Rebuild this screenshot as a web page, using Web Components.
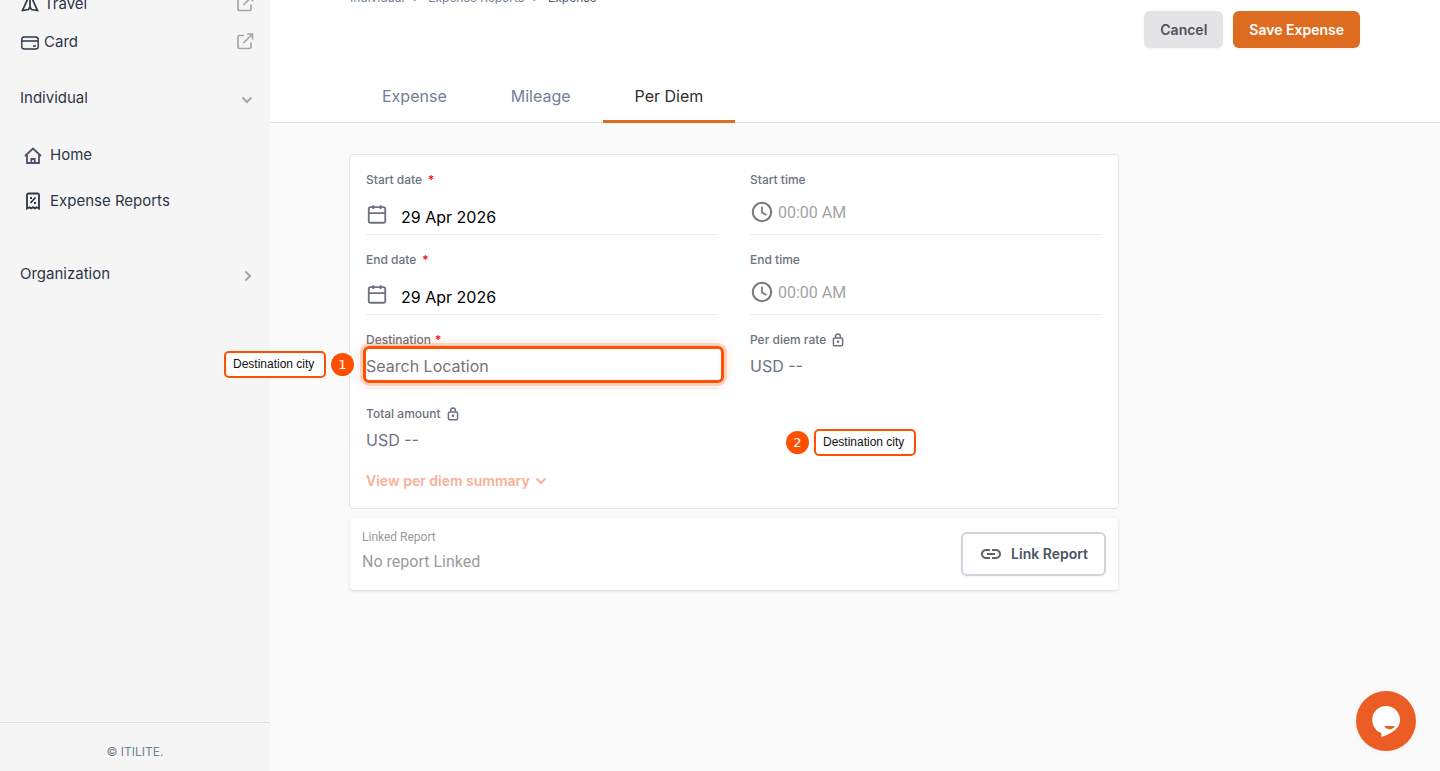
<!DOCTYPE html>
<html lang="en">
<head>
<meta charset="utf-8">
<title>Per Diem Expense</title>
<style>
html, body { margin: 0; height: 100%; }
body { font-family: Inter, "Liberation Sans", sans-serif; font-size: 16px; line-height: 24px; color: #2d3748; overflow: hidden; }
</style>
</head>
<body>
<expense-app></expense-app>
<script>
const icons = {
  travel: ['0 0 20 20', '<path d="M10 0 2.500 16.500 8.500 15.500 10 13l1.500 2.500 6 1zM10 5.500V14" stroke-width="1.7"/>'],
  card: ['0 0 20 20', '<rect x="1.800" y="5" width="16.400" height="12" rx="2.600" stroke-width="1.4"/><path d="M2 9h16M13 14h3" stroke-width="1.4"/>'],
  external: ['0 0 20 20', '<path d="M9 3.500H4.500Q3 3.500 3 5v10Q3 16.500 4.500 16.500h10q1.500 0 1.500-1.500v-4.500M8.500 11 17 2.500M12 2h5.500v5.500" stroke-width="1.7"/>'],
  down: ['0 0 16 16', '<path d="m3.500 5.500 4.500 4.500 4.500-4.500" stroke-width="2"/>'],
  right: ['0 0 16 16', '<path d="m6.500 3.500 4.500 4.500-4.500 4.500" stroke-width="2"/>'],
  home: ['0 0 20 20', '<path d="M2 11 10 3.500l8 7.500M4 10v8h12v-8M8.300 18v-4h3.400v4" stroke="#4a5568" stroke-width="1.8"/>'],
  receipt: ['0 0 20 20', '<path d="M4 17.500V4Q4 2.500 5.500 2.500h9Q16 2.500 16 4v13.500L13.500 16.200 11.800 17.500 10 16.200 8.200 17.500 6.500 16.200zM7.500 12l5-5.500" stroke-width="1.8"/><path d="M7 6h2v2H7zM11 11h2v2h-2z" fill="currentColor" stroke="none"/>'],
  calendar: ['0 0 24 24', '<rect x="3" y="4.500" width="18" height="17" rx="2"/><path d="M8 2.500v4M16 2.500v4M3 11h18" />'],
  clock: ['0 0 24 24', '<circle cx="12" cy="12" r="9.200"/><path d="M12 6.500v6l4.500 2.600" stroke-width="1.700"/>'],
  lock: ['0 0 14 14', '<rect x="2.400" y="5" width="9.200" height="7.800" rx="1.200" stroke-width="1.500"/><path d="M4.700 5V3.300a2.300 2.300 0 0 1 4.600 0V5" stroke-width="1.500"/><circle cx="7" cy="8.800" r="1.300" fill="currentColor" stroke="none"/>'],
  link: ['0 0 24 24', '<path d="M3.900 12c0-1.710 1.390-3.100 3.100-3.100h4V7H7c-2.760 0-5 2.240-5 5s2.240 5 5 5h4v-1.900H7c-1.710 0-3.100-1.390-3.100-3.100zM8 13h8v-2H8v2zm9-6h-4v1.900h4c1.710 0 3.100 1.390 3.100 3.100s-1.390 3.100-3.100 3.100h-4V17h4c2.760 0 5-2.240 5-5s-2.240-5-5-5z" fill="#636369" stroke="none"/>'],
  chat: ['0 0 60 60', '<path d="M30 15a14 14 0 0 1 14 14c0 8-7 13-18.500 17l-.3-3.900A14 14 0 0 1 30 15z" fill="#fff" stroke="none"/><path d="M28.500 35h10.300c-1 4.200-9.300 4.200-10.300 0z" fill="#eb5d25" stroke="none"/>']
};

function define(name, css, html) {
  customElements.define(name, class extends HTMLElement {
    constructor() {
      super();
      const a = key => this.getAttribute(key) || '';
      this.attachShadow({ mode: 'open' }).innerHTML =
        `<style>*{box-sizing:border-box}${css}</style>` + (typeof html === 'function' ? html(a) : html);
    }
  });
}

define('ui-icon',
  `:host{display:inline-flex;flex:none;width:20px;height:20px}
   svg{width:100%;height:100%;fill:none;stroke:currentColor;stroke-width:2}`,
  a => { const [box, body] = icons[a('name')]; return `<svg viewBox="${box}" aria-hidden="true">${body}</svg>`; });

define('nav-link',
  `:host{display:block;font-size:15px}
   a{display:flex;align-items:center;height:38px;gap:4px;color:inherit;text-decoration:none}
   :host([nested]) a{height:46px;gap:7px;padding-left:3px}
   span{flex:1}
   .out{color:#a6a6a6}`,
  a => `<a href="#"><ui-icon name="${a('icon')}"></ui-icon><span><slot></slot></span>${a('out') ? '<ui-icon class="out" name="external"></ui-icon>' : ''}</a>`);

define('nav-group',
  `:host{display:block;font-size:15px}
   button{display:flex;justify-content:space-between;align-items:center;width:100%;height:24px;padding:0;border:0;background:none;font:inherit;color:inherit;text-align:left}
   ui-icon{color:#a6a6a6;width:16px;height:16px;margin-top:4px}`,
  a => `<button><slot></slot><ui-icon name="${a('icon')}"></ui-icon></button>`);

define('side-bar',
  `:host{display:flex;flex-direction:column;flex:none;width:270px;height:100vh;background:#f5f5f5;overflow:hidden}
   nav{flex:1;display:flex;flex-direction:column;padding:0 15px 0 20px;margin-top:-15px}
   .apps{margin-bottom:25px}
   .pages{margin:22px 0 38px}
   footer{height:49px;border-top:1px solid #dcdcdc;text-align:center;font-size:12px;line-height:58px;color:#718096}`,
  `<nav>
    <div class="apps"><nav-link icon="travel" out="1">Travel</nav-link><nav-link icon="card" out="1">Card</nav-link></div>
    <nav-group icon="down">Individual</nav-group>
    <div class="pages"><nav-link nested icon="home">Home</nav-link><nav-link nested icon="receipt">Expense Reports</nav-link></div>
    <nav-group icon="right">Organization</nav-group>
   </nav>
   <footer>© ITILITE.</footer>`);

define('app-button',
  `button{font:600 14px/20px Inter,"Liberation Sans",sans-serif;display:flex;align-items:center;gap:8px;height:37px;padding:0 16px;border:0;border-radius:6px;background:#e4e4e7;color:#52525b;box-shadow:0 1px 2px #0000000d;white-space:nowrap}
   :host{display:block}
   :host([primary]) button{background:#dd6b20;color:#fff}
   :host([outline]) button{height:44px;background:#fff;border:2px solid #d1d5db;color:#4b5563}`,
  `<button><slot></slot></button>`);

define('page-header',
  `:host{display:flex;flex-direction:column;height:123px;padding:0 80px;background:#fff;border-bottom:1px solid #e0e0e0;box-sizing:border-box}
   .top{display:flex;justify-content:space-between;flex:1}
   ol{display:flex;gap:8px;margin:-10px 0 0;padding:0;list-style:none;font-size:12px;line-height:16px;color:#718096}
   a{color:inherit;text-decoration:none}
   li:last-child{color:#4a5568}
   .actions{display:flex;gap:10px;margin-top:11px}
   nav{display:flex;margin-bottom:-1px}
   nav a{padding:12px 32px;border-bottom:3px solid transparent;color:#718096}
   nav a[aria-current]{border-color:#dd6b20;color:#2d2d2d}`,
  `<div class="top"><ol><li><a href="#">Individual</a></li><li>&gt;</li><li><a href="#">Expense Reports</a></li><li>&gt;</li><li>Expense</li></ol>
    <div class="actions"><app-button>Cancel</app-button><app-button primary>Save Expense</app-button></div></div>
   <nav><a href="#">Expense</a><a href="#">Mileage</a><a href="#" aria-current="page">Per Diem</a></nav>`);

define('form-field',
  `:host{display:block;min-width:0;padding-top:16px;height:80px;box-sizing:border-box}
   label{display:flex;align-items:center;gap:6px;font-size:12px;font-weight:500;line-height:18px;color:#6b7280}
   b{color:#f00;font-weight:500}
   .row{display:flex;align-items:center;height:46px;border-bottom:1px solid #e8eff4}
   input{flex:1;min-width:0;width:100%;height:24px;padding:0;border:0;outline:0;background:none;font:inherit;color:#000}
   input::placeholder{color:#757575;opacity:1}
   ui-icon{width:24px;height:24px;color:#6b7280}
   label ui-icon{width:14px;height:14px}
   :host([kind=date]) .row{padding-top:5px;gap:13px}
   :host([kind=date]) .row ui-icon{width:22px;height:22px}
   :host([kind=date]) input{height:30px;padding-top:6px}
   :host([kind=time]) .row{gap:4px;font-family:Roboto,sans-serif}
   :host([kind=time]) .row ui-icon{color:#757575}
   :host([kind=time]) input{height:26px;padding-top:2px}
   :host([kind=time]) input::placeholder{color:#a3a3a3}
   :host([kind=search]),:host([kind=value]){height:74px}
   :host([kind=search]) .row{position:relative;height:40px;padding-bottom:5px}
   :host([kind=search]) label{gap:4px}
   :host([kind=value]) label{gap:5px}
   :host([kind=value]) .row{height:34px;border:0;color:#6b7280}
   .focus{position:absolute;inset:-3px -6px 5px -3px;border:3px solid #ff4f00;border-radius:6px;box-shadow:0 0 0 3px #ff4f0033,0 0 14px #ff4f0033;pointer-events:none}`,
  a => {
    const kind = a('kind'), icon = { date: 'calendar', time: 'clock' }[kind];
    const body = kind === 'value' ? `<output id="f">${a('value')}</output>`
      : `<input id="f" type="text" value="${a('value')}" placeholder="${a('placeholder')}">`;
    return `<label for="f">${a('label')}${a('required') ? '<b>*</b>' : ''}${kind === 'value' ? '<ui-icon name="lock"></ui-icon>' : ''}</label>
      <div class="row">${icon ? `<ui-icon name="${icon}"></ui-icon>` : ''}${body}${kind === 'search' ? '<div class="focus"></div>' : ''}</div>`;
  });

define('call-out',
  `:host{position:absolute;display:flex;align-items:center;gap:5px;color:#111;font:12px/23px "Liberation Sans",sans-serif;white-space:nowrap}
   :host([reverse]){flex-direction:row-reverse}
   .text{min-width:102px;height:27px;padding:0 7px;border:2px solid #ff4f00;border-radius:5px;background:#fff}
   .num{width:23px;height:23px;border-radius:50%;background:#ff4f00;color:#fff;text-align:center;font:13px/24px "DejaVu Sans",sans-serif;box-shadow:0 0 0 2px #fff}`,
  a => `<span class="text"><slot></slot></span><span class="num">${a('number')}</span>`);

define('per-diem-form',
  `:host{display:block;position:relative;background:#fff;border-radius:4px;box-shadow:0 0 0 1px #e5e5e5;padding:0 16px 9px}
   .grid{display:grid;grid-template-columns:1fr 1fr;column-gap:32px}
   button{display:flex;align-items:center;gap:3px;height:36px;padding:0;border:0;background:none;font:600 14px/20px Inter,"Liberation Sans",sans-serif;color:#f8b195}
   button ui-icon{width:16px;height:16px}
   .one{right:764px;top:196px}
   .two{left:436px;top:274px}`,
  `<div class="grid">
    <form-field kind="date" label="Start date" required="1" value="29 Apr 2026"></form-field>
    <form-field kind="time" label="Start time" placeholder="00:00 AM"></form-field>
    <form-field kind="date" label="End date" required="1" value="29 Apr 2026"></form-field>
    <form-field kind="time" label="End time" placeholder="00:00 AM"></form-field>
    <form-field kind="search" label="Destination" required="1" placeholder="Search Location"></form-field>
    <form-field kind="value" label="Per diem rate" value="USD --"></form-field>
    <form-field kind="value" label="Total amount" value="USD --"></form-field>
   </div>
   <button>View per diem summary <ui-icon name="down"></ui-icon></button>
   <call-out class="one" number="1">Destination city</call-out>
   <call-out class="two" number="2" reverse>Destination city</call-out>`);

define('linked-report',
  `:host{display:flex;justify-content:space-between;align-items:center;height:72px;padding:0 12px;background:#fff;border-radius:4px;box-shadow:0 1px 3px #00000026;font-family:Roboto,sans-serif;color:#9b9b9b}
   small{display:block;font-size:12px;line-height:20px}
   p{margin:3px 0 7px}
   ui-icon{width:24px;height:24px}`,
  `<div><small>Linked Report</small><p>No report Linked</p></div>
   <app-button outline><ui-icon name="link"></ui-icon>Link Report</app-button>`);

define('chat-button',
  `:host{position:fixed;right:24px;bottom:20px}
   button{display:block;width:60px;height:60px;padding:0;border:0;border-radius:50%;background:#eb5d25;box-shadow:0 1px 4px #0000000d}
   ui-icon{width:60px;height:60px}`,
  `<button aria-label="Open chat"><ui-icon name="chat"></ui-icon></button>`);

define('expense-app',
  `:host{display:flex;min-height:100vh;background:#fafafa}
   main{flex:1;min-width:0}
   .content{display:flex;flex-direction:column;gap:10px;max-width:768px;margin:32px 80px}`,
  `<side-bar></side-bar>
   <main><page-header></page-header><div class="content"><per-diem-form></per-diem-form><linked-report></linked-report></div></main>
   <chat-button></chat-button>`);
</script>
</body>
</html>
